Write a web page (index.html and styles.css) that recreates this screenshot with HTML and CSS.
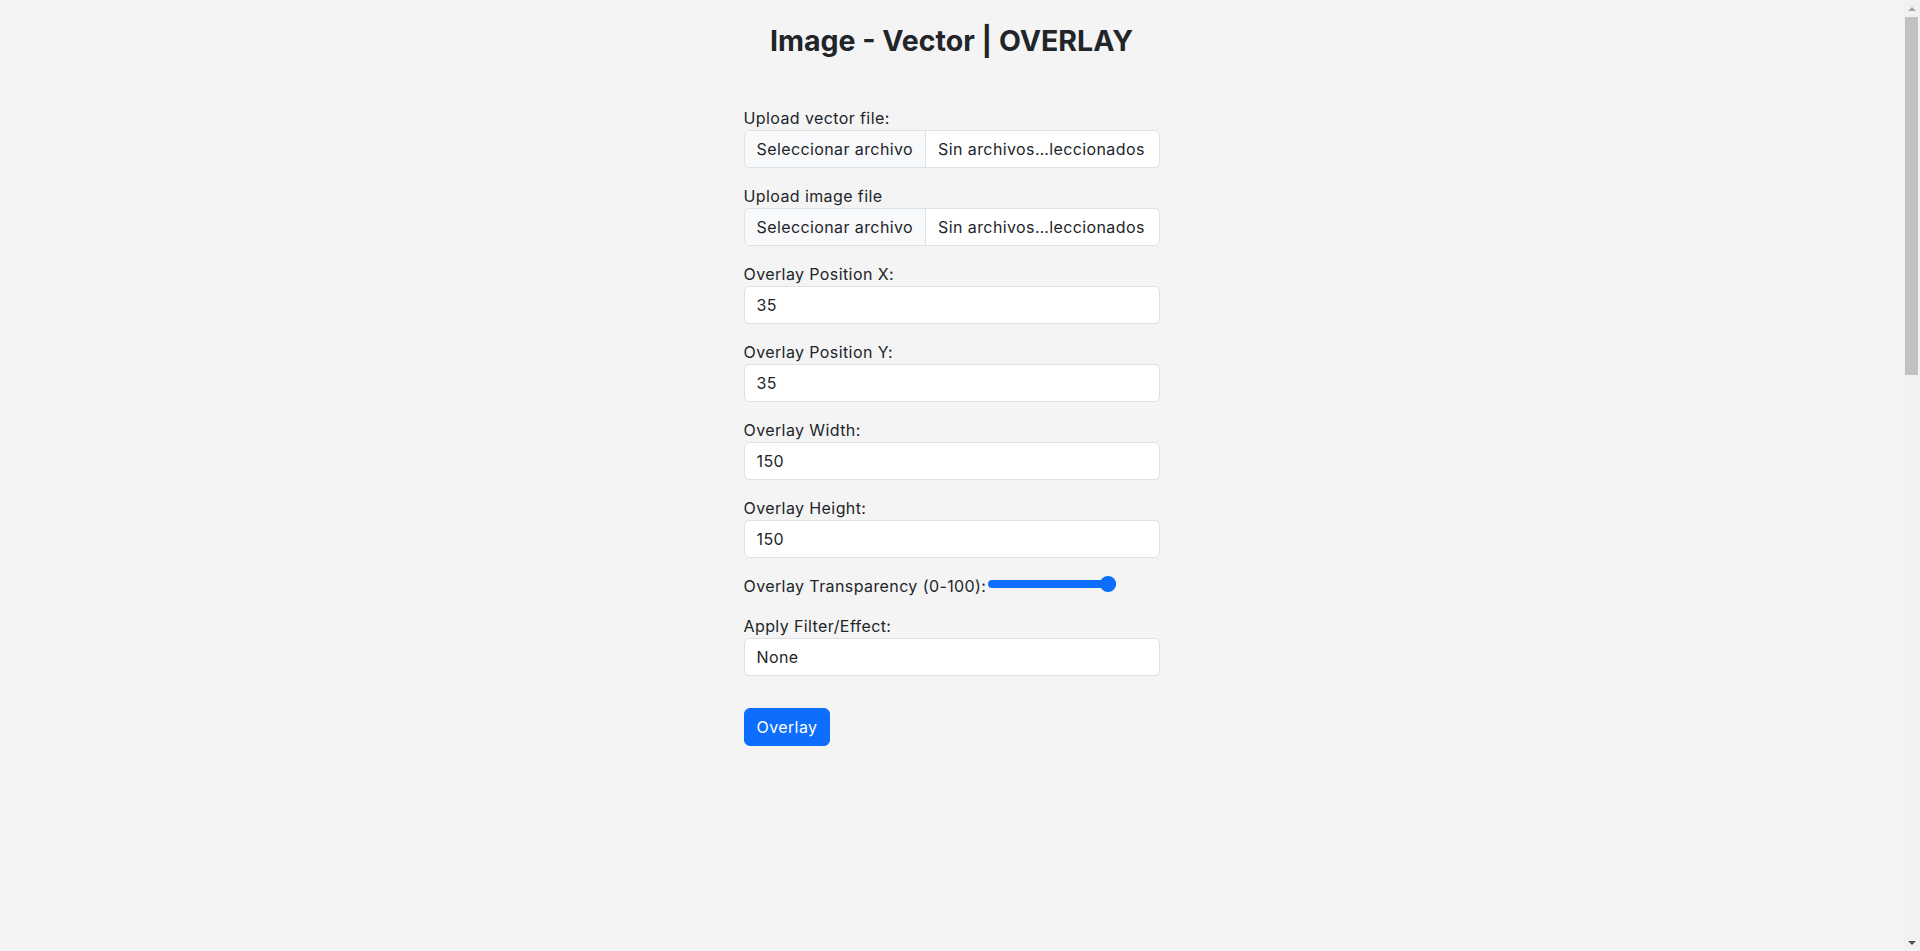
FILE: index.html
```html
<!DOCTYPE html>
<html lang="es">
<head>
<meta charset="utf-8">
<title>Image - Vector | OVERLAY</title>
<link rel="stylesheet" href="styles.css">
</head>
<body>
<div class="page">
  <div class="container">
    <h1 class="title">Image - Vector | OVERLAY</h1>
    <form class="form">
      <div class="group">
        <label class="label">Upload vector file:</label>
        <div class="file">
          <span class="file-btn">Seleccionar archivo</span>
          <span class="file-name">Sin archivos…leccionados</span>
        </div>
      </div>
      <div class="group">
        <label class="label">Upload image file</label>
        <div class="file">
          <span class="file-btn">Seleccionar archivo</span>
          <span class="file-name">Sin archivos…leccionados</span>
        </div>
      </div>
      <div class="group">
        <label class="label" for="px">Overlay Position X:</label>
        <input class="field" id="px" type="text" value="35">
      </div>
      <div class="group">
        <label class="label" for="py">Overlay Position Y:</label>
        <input class="field" id="py" type="text" value="35">
      </div>
      <div class="group">
        <label class="label" for="ow">Overlay Width:</label>
        <input class="field" id="ow" type="text" value="150">
      </div>
      <div class="group">
        <label class="label" for="oh">Overlay Height:</label>
        <input class="field" id="oh" type="text" value="150">
      </div>
      <div class="group">
        <label class="label" for="ot">Overlay Transparency (0-100):</label><input class="range" id="ot" type="range" min="0" max="100" value="100">
      </div>
      <div class="group">
        <label class="label" for="fx">Apply Filter/Effect:</label>
        <select class="field select" id="fx">
          <option>None</option>
        </select>
      </div>
      <button class="btn" type="button">Overlay</button>
    </form>
    <div class="preview"></div>
  </div>
</div>
<div class="scrollbar" aria-hidden="true">
  <div class="sb-arrow sb-up"></div>
  <div class="sb-track"><div class="sb-thumb"></div></div>
  <div class="sb-arrow sb-down"></div>
</div>
</body>
</html>
```
FILE: styles.css
```css
html, body {
  margin: 0;
  padding: 0;
}
body {
  background: #f4f4f4;
  color: #212529;
  font-family: Inter, "Open Sans", sans-serif;
  font-size: 16px;
  line-height: 1.5;
  letter-spacing: 0.4px;
}
.page {
  margin-right: 17px;
}
.container {
  width: 416px;
  margin: 0 auto;
  padding-top: 24px;
}
.title {
  margin: 0 0 48px;
  font-size: 28.5px;
  font-weight: 700;
  line-height: 1.2;
  letter-spacing: 0;
  text-align: center;
  color: #212529;
  white-space: nowrap;
}
.form {
  margin: 0;
}
.group {
  margin-bottom: 16px;
}
.label {
  display: inline;
}
.file {
  display: flex;
  height: 38px;
  box-sizing: border-box;
  border: 1px solid #dee2e6;
  border-radius: 6px;
  background: #fff;
  overflow: hidden;
}
.file-btn {
  padding: 6px 12px;
  background: #f8f9fa;
  border-right: 1px solid #dee2e6;
  white-space: nowrap;
}
.file-name {
  padding: 6px 12px;
  white-space: nowrap;
}
.field {
  display: block;
  width: 100%;
  height: 38px;
  box-sizing: border-box;
  margin: 0;
  padding: 6px 12px;
  font: inherit;
  letter-spacing: inherit;
  color: #212529;
  background: #fff;
  border: 1px solid #dee2e6;
  border-radius: 6px;
  outline: none;
}
.select {
  appearance: none;
  -webkit-appearance: none;
}
.range {
  -webkit-appearance: none;
  appearance: none;
  vertical-align: top;
  width: 128px;
  height: 16px;
  margin: 2px 2px 0;
  padding: 0;
  background: transparent;
}
.range::-webkit-slider-runnable-track {
  height: 8px;
  border-radius: 4px;
  background: #0d6efd;
}
.range::-webkit-slider-thumb {
  -webkit-appearance: none;
  appearance: none;
  width: 16px;
  height: 16px;
  margin-top: -4px;
  border-radius: 50%;
  background: #0d6efd;
  border: none;
}
.btn {
  margin-top: 16px;
  display: inline-block;
  height: 38px;
  box-sizing: border-box;
  padding: 6px 12px;
  font: inherit;
  letter-spacing: inherit;
  color: #fff;
  background: #0d6efd;
  border: 1px solid #0d6efd;
  border-radius: 6px;
  cursor: pointer;
}
.preview {
  height: 1689px;
}
.scrollbar {
  position: fixed;
  top: 0;
  right: 0;
  width: 17px;
  height: 100vh;
  background: #f1f1f1;
  display: flex;
  flex-direction: column;
}
.sb-arrow {
  height: 17px;
  flex: none;
  display: flex;
  align-items: center;
  justify-content: center;
}
.sb-up::before,
.sb-down::before {
  content: "";
  width: 0;
  height: 0;
  border-left: 4px solid transparent;
  border-right: 4px solid transparent;
}
.sb-up::before {
  border-bottom: 4px solid #a3a3a3;
}
.sb-down::before {
  border-top: 4px solid #505050;
}
.sb-track {
  flex: 1;
  padding: 0 2px;
}
.sb-thumb {
  height: 358px;
  background: #c1c1c1;
}
```
